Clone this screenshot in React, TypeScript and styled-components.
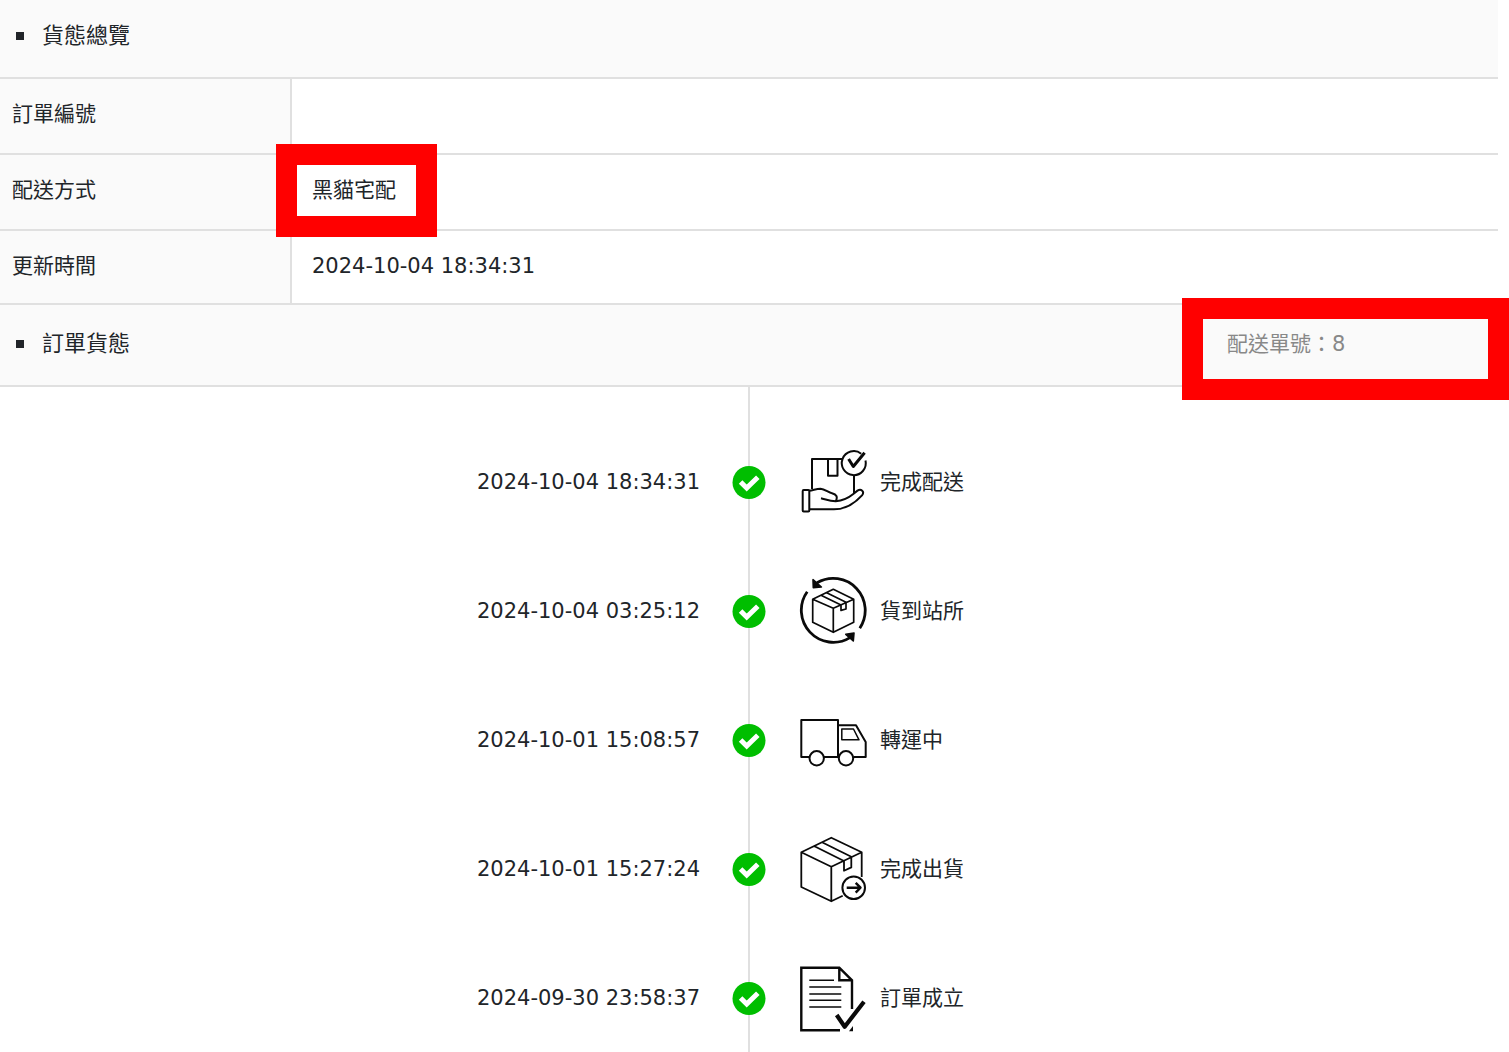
import React from "react";
import styled, { createGlobalStyle } from "styled-components";

const line = "#e0e0e0";
const shade = "#fafafa";

const GlobalStyle = createGlobalStyle`
  *, *::before, *::after { box-sizing: border-box; }
  body {
    margin: 0;
    background: #fff;
    color: #212529;
    font-family: "DejaVu Sans", "Noto Sans CJK TC", sans-serif;
    font-size: 21px;
    line-height: 30px;
  }
`;

const Page = styled.main`
  display: flex;
  flex-direction: column;
  min-height: 100vh;
  padding-right: 11px;
`;

const SectionHeader = styled.header<{ $top: number }>`
  display: flex;
  align-items: center;
  justify-content: space-between;
  padding: ${(p) => p.$top}px 0 26px 16px;
  background: ${shade};
  border-bottom: 2px solid ${line};
`;

const SectionTitle = styled.h2`
  display: flex;
  align-items: center;
  gap: 18px;
  margin: 0;
  font-size: 22px;
  font-weight: 400;
  line-height: 30px;

  &::before {
    content: "";
    width: 8px;
    height: 8px;
    background: #212529;
  }
`;

const Tracking = styled.div`
  position: relative;
  width: 271px;
  color: #888;
`;

const Highlight = styled.span<{ $box: string }>`
  position: absolute;
  inset: ${(p) => p.$box};
  border: 21px solid #f00;
  pointer-events: none;
`;

const InfoTable = styled.table`
  width: 100%;
  border-collapse: separate;
  border-spacing: 0;
`;

const Label = styled.th`
  width: 292px;
  padding: 20px 12px 24px;
  background: ${shade};
  border-right: 2px solid ${line};
  border-bottom: 2px solid ${line};
  font-weight: 400;
  text-align: left;

  tr:last-child > & { padding-bottom: 22px; }
`;

const Value = styled.td`
  padding: 20px 20px 24px;
  border-bottom: 2px solid ${line};

  tr:last-child > & { padding-bottom: 22px; }
`;

const Marked = styled.span`
  position: relative;
  display: inline-block;
`;

const Timeline = styled.ol`
  display: flex;
  flex: 1;
  flex-direction: column;
  gap: 59px;
  margin: 0;
  padding: 60px 0 0;
  list-style: none;
  background: linear-gradient(${line}, ${line}) center top / 2px 100% no-repeat;
`;

const Step = styled.li`
  display: grid;
  grid-template-columns: 1fr 34px 1fr;
  align-items: center;
  column-gap: 32px;
  height: 70px;
`;

const StepTime = styled.time`
  text-align: right;
`;

const StepStatus = styled.div`
  display: flex;
  align-items: center;
  gap: 12px;
`;

const Drawing = styled.svg`
  flex: none;
  fill: none;
  stroke: #0a0a0a;
  stroke-width: 2;
  stroke-linejoin: round;
`;

const Icon = ({ top = 0, children }: { top?: number; children: React.ReactNode }) => (
  <Drawing width="70" height="70" viewBox={`0 ${top} 70 70`} aria-hidden="true">
    {children}
  </Drawing>
);

const Check = () => (
  <svg width="34" height="34" viewBox="0 0 34 34" aria-hidden="true">
    <circle cx="17" cy="17.5" r="16.5" fill="#00be00" />
    <path d="M8.6 17 14.7 23 25.8 12.2" fill="none" stroke="#fff" strokeWidth="5" />
  </svg>
);

const Delivered = () => (
  <Icon top={1}>
    <path d="M14 43V13H44M56 29V47.3M30 13V29.7H39.5V13" />
    <path d="M63.2 7.7A12 12 0 1 0 67.5 14.5" />
    <path d="M50.6 13 55.3 20.5 66.6 6.8" strokeWidth="3" />
    <rect x="4.7" y="44" width="6.6" height="21.4" rx="1" />
    <path d="M11.3 44.7C15 44.5 18 42.7 22.5 42.7C27 43 30.5 46.8 34 47.2C38.5 48.3 40 51 37.7 55.3C32 55 28 53.5 23 52.3M37.7 55.3C46 54.5 51 51.5 55.3 48L59.5 44.6C63 42.3 67 45.5 64 49.3C57 57 47 63.3 36 63.3H11.3" />
  </Icon>
);

const AtStation = () => (
  <Icon>
    <path d="M19 6.8A32 32 0 0 1 61.8 52.2M9.2 15.8A32 32 0 0 0 52 61.6" strokeWidth="2.8" />
    <path d="M15 3.7 15.3 11.7 23.4 11ZM56 57 47.8 58.3 55.3 65Z" fill="#0a0a0a" strokeWidth="1.6" />
    <path
      d="M35.3 13.3 14.7 23.3V46.3L35.3 56.3 55.7 46.3V23.3ZM14.7 23.3 35.3 32.3 55.7 23.3M35.3 32.3V56.3M28.7 16.7 48 26.3V33L43 34.4V29L23 19.3"
      strokeWidth="1.7"
    />
  </Icon>
);

const InTransit = () => (
  <Icon top={3}>
    <path d="M11.4 55H3.3V18H40V55H26M40 23.3H58L67.7 40V55H55.3M40 55H41" />
    <path d="M43.8 27H55.5L61 37.8H43.8Z" strokeWidth="1.5" />
    <circle cx="18.7" cy="56.3" r="7.2" />
    <circle cx="48" cy="56.3" r="7.2" />
  </Icon>
);

const Shipped = () => (
  <Icon top={-2}>
    <path
      d="M63.7 41V16.3L33.3 1.7 3.3 16.3V51L33.3 65.3 44.7 59.8M3.3 16.3 33.3 30.7 63.7 16.3M33.3 30.7V65.3M24 6.3 53.3 20.7V31.4L46 34.7V25L16 10"
      strokeWidth="1.8"
    />
    <circle cx="55.7" cy="51.7" r="11.3" />
    <path d="M48.7 51.7H62.5M57.7 46.8 62.5 51.7 57.7 56.6" strokeWidth="2.4" />
  </Icon>
);

const Ordered = () => (
  <Icon top={-3}>
    <path d="M42 64.3H3.3V1.7H41.3L54 14.3V43M41.3 1.7V14.3H54" strokeLinejoin="miter" strokeWidth="2.4" />
    <path d="M11.3 14.3H36M11.3 21H43.3M11.3 28H43.3M11.3 34.3H43.3M11.3 41H43.3" strokeWidth="1.5" />
    <path d="M38.7 49 46.7 60.7 66 35.7" strokeWidth="4.2" />
    <path d="M55 60V65.3H51Z" fill="#0a0a0a" stroke="none" />
  </Icon>
);

const steps = [
  { time: "2024-10-04 18:34:31", status: "完成配送", Picture: Delivered },
  { time: "2024-10-04 03:25:12", status: "貨到站所", Picture: AtStation },
  { time: "2024-10-01 15:08:57", status: "轉運中", Picture: InTransit },
  { time: "2024-10-01 15:27:24", status: "完成出貨", Picture: Shipped },
  { time: "2024-09-30 23:58:37", status: "訂單成立", Picture: Ordered },
];

export default function App() {
  return (
    <Page>
      <GlobalStyle />
      <SectionHeader $top={21}>
        <SectionTitle>貨態總覽</SectionTitle>
      </SectionHeader>
      <InfoTable>
        <tbody>
          <tr>
            <Label scope="row">訂單編號</Label>
            <Value />
          </tr>
          <tr>
            <Label scope="row">配送方式</Label>
            <Value>
              <Marked>
                黑貓宅配
                <Highlight $box="-31px -41px -32px -36px" />
              </Marked>
            </Value>
          </tr>
          <tr>
            <Label scope="row">更新時間</Label>
            <Value>2024-10-04 18:34:31</Value>
          </tr>
        </tbody>
      </InfoTable>
      <SectionHeader $top={24}>
        <SectionTitle>訂單貨態</SectionTitle>
        <Tracking>
          配送單號：8
          <Highlight $box="-31px -11px -41px -45px" />
        </Tracking>
      </SectionHeader>
      <Timeline>
        {steps.map(({ time, status, Picture }) => (
          <Step key={time}>
            <StepTime dateTime={time}>{time}</StepTime>
            <Check />
            <StepStatus>
              <Picture />
              {status}
            </StepStatus>
          </Step>
        ))}
      </Timeline>
    </Page>
  );
}
